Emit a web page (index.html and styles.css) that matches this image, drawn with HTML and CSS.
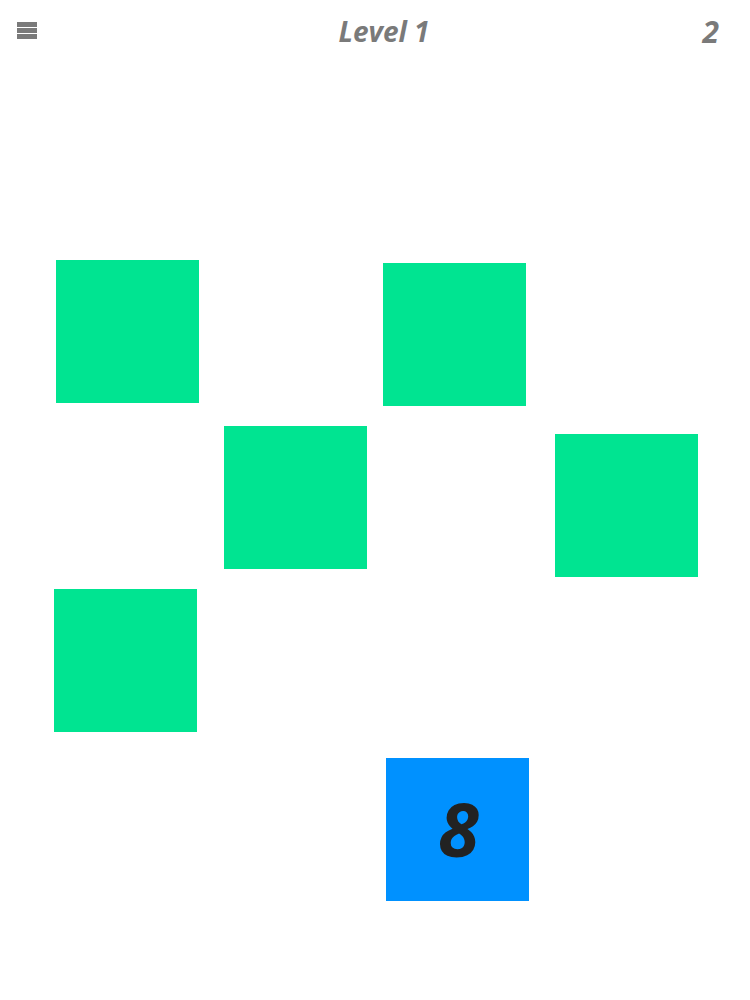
FILE: index.html
```html
<!DOCTYPE html>
<html>
<head>
<meta charset="utf-8">
<link rel="stylesheet" href="styles.css">
</head>
<body>
<div class="app">
  <header class="topbar">
    <div class="menu" aria-label="menu">
      <span class="bar"></span><span class="bar"></span><span class="bar"></span>
    </div>
    <div class="title">Level 1</div>
    <div class="score">2</div>
  </header>
  <main class="board">
    <div class="tile green" style="left:56px;top:260px"></div>
    <div class="tile green" style="left:383px;top:263px"></div>
    <div class="tile green" style="left:224px;top:426px"></div>
    <div class="tile green" style="left:555px;top:434px"></div>
    <div class="tile green" style="left:54px;top:589px"></div>
    <div class="tile blue" style="left:386px;top:758px"><span class="num">8</span></div>
  </main>
</div>
</body>
</html>
```
FILE: styles.css
```css
html, body {
  margin: 0;
  padding: 0;
  background: #ffffff;
}
.app {
  position: relative;
  width: 750px;
  height: 1000px;
  overflow: hidden;
  font-family: "Open Sans", "Liberation Sans", sans-serif;
}
.topbar {
  display: flex;
  align-items: center;
  justify-content: space-between;
  height: 62px;
  padding: 0 31px 0 17px;
  position: relative;
}
.menu {
  display: flex;
  flex-direction: column;
  gap: 1.6px;
  width: 20px;
  margin-top: -1px;
}
.bar {
  display: block;
  height: 4.6px;
  background: #7a7a7a;
}
.title {
  position: absolute;
  left: 18px;
  right: 0;
  text-align: center;
  top: 12px;
  font-size: 28px;
  font-weight: 700;
  font-style: italic;
  color: #7a7a7a;
  letter-spacing: 0;
  pointer-events: none;
}
.score {
  font-size: 30px;
  font-weight: 700;
  font-style: italic;
  color: #7a7a7a;
  margin-top: 1px;
}
.board {
  position: absolute;
  inset: 0;
}
.tile {
  position: absolute;
  width: 143px;
  height: 143px;
  display: flex;
  align-items: center;
  justify-content: center;
}
.green {
  background: #00e491;
}
.blue {
  background: #0091ff;
}
.num {
  font-size: 74px;
  font-weight: 700;
  font-style: italic;
  color: #222222;
  line-height: 1;
  margin-left: 2px;
  margin-top: -2px;
}
```
